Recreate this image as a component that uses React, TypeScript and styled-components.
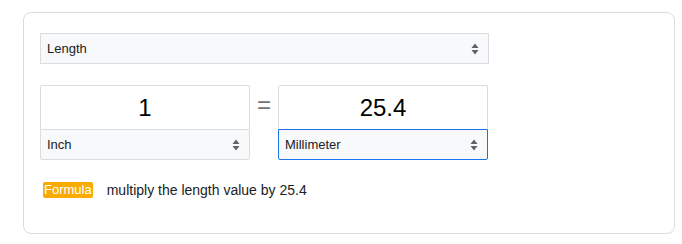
import React from "react"
import styled, { createGlobalStyle } from "styled-components"

const Global = createGlobalStyle`
  body {
    margin: 0;
    background: #fff;
    font-family: "Liberation Sans", Arial, sans-serif;
    color: #202124;
  }
`

const Page = styled.div`
  padding: 12px 8px 11px 23px;
`

const Card = styled.div`
  box-sizing: border-box;
  width: 652px;
  height: 222px;
  border: 1px solid #dadce0;
  border-radius: 8px;
  padding: 20px 0 0 16px;
`

const Select = styled.div<{ $focused?: boolean }>`
  display: flex;
  align-items: center;
  justify-content: space-between;
  box-sizing: border-box;
  height: 31px;
  padding: 0 9px 0 6px;
  background: #f8f9fa;
  border: 1px solid ${p => (p.$focused ? "#1a73e8" : "#dadce0")};
  font-size: 13px;
  color: #202124;
`

const Category = styled(Select)`
  width: 449px;
`

const Row = styled.div`
  display: flex;
  align-items: flex-start;
  margin-top: 21px;
  width: 449px;
`

const Unit = styled.div`
  display: flex;
  flex-direction: column;
  width: 210px;
`

const ValueBox = styled.input`
  box-sizing: border-box;
  width: 100%;
  height: 44px;
  margin: 0;
  border: 1px solid #dadce0;
  border-bottom: none;
  border-radius: 2px 2px 0 0;
  outline: none;
  text-align: center;
  font-family: "Liberation Sans", Arial, sans-serif;
  font-size: 24px;
  color: #000;
  padding: 0;
  background: #fff;
`

const UnitSelect = styled(Select)`
  border-radius: 0 0 2px 2px;
`

const Equals = styled.div`
  width: 28px;
  text-align: center;
  font-size: 24px;
  line-height: 40px;
  color: #70757a;
`

const FormulaRow = styled.div`
  display: flex;
  align-items: center;
  margin-top: 22px;
  padding-left: 3px;
  font-size: 14px;
  color: #202124;
`

const Badge = styled.span`
  display: inline-block;
  background: #f9ab00;
  color: #fff;
  font-size: 13px;
  line-height: 16px;
  padding: 0 1px;
  border-radius: 2px;
  margin-right: 14px;
`

const Arrows = () => (
  <svg width="8" height="12" viewBox="0 0 8 12">
    <path d="M4 0.5 L7.5 5 L0.5 5 Z" fill="#5f6368" />
    <path d="M4 11.5 L7.5 7 L0.5 7 Z" fill="#5f6368" />
  </svg>
)

export default function App() {
  return (
    <>
      <Global />
      <Page>
        <Card>
          <Category>
            <span>Length</span>
            <Arrows />
          </Category>
          <Row>
            <Unit>
              <ValueBox defaultValue="1" />
              <UnitSelect>
                <span>Inch</span>
                <Arrows />
              </UnitSelect>
            </Unit>
            <Equals>=</Equals>
            <Unit>
              <ValueBox defaultValue="25.4" />
              <UnitSelect $focused>
                <span>Millimeter</span>
                <Arrows />
              </UnitSelect>
            </Unit>
          </Row>
          <FormulaRow>
            <Badge>Formula</Badge>
            <span>multiply the length value by 25.4</span>
          </FormulaRow>
        </Card>
      </Page>
    </>
  )
}
